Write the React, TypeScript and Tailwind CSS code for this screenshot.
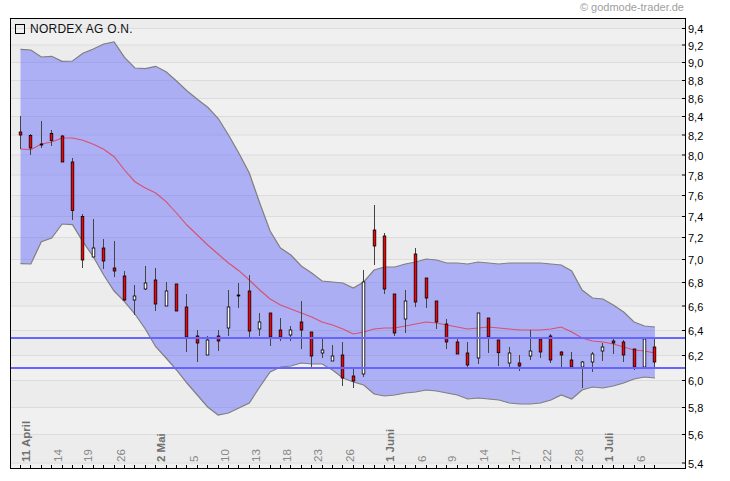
const font = "'Liberation Sans', Arial, sans-serif";

// y pixel of each price gridline, top to bottom
const priceLevels: [string, number][] = [
  ["9,4", 28.5], ["9,2", 45], ["9,0", 62.5], ["8,8", 80.5], ["8,6", 98.5], ["8,4", 116.5], ["8,2", 135],
  ["8,0", 155], ["7,8", 175], ["7,6", 195.5], ["7,4", 216.5], ["7,2", 237.5], ["7,0", 259.5], ["6,8", 282.5],
  ["6,6", 306], ["6,4", 330.5], ["6,2", 355.5], ["6,0", 380.5], ["5,8", 407.5], ["5,6", 434.5], ["5,4", 463],
];

const upper = [
  49.3, 50, 57, 56.3, 61.3, 61, 53.3, 49, 44, 42, 57.3, 68, 68.7, 66.3, 71.7, 81, 90.7, 99.3, 107.3, 118.3, 135, 153.3,
  173, 203, 231, 248, 255, 266, 273, 281, 282, 283, 288, 282, 270, 267, 267, 264, 262, 259, 260, 263, 263, 264, 262,
  263, 264, 263, 263, 263, 263, 264, 265, 271, 290, 298, 299, 305, 312, 322, 326, 327,
];
const lower = [
  263.7, 264, 241.7, 238, 224, 224.7, 241.7, 256.7, 275, 291, 301.7, 314, 329, 346.7, 358, 370, 383, 395, 407, 415, 413,
  408, 403, 387, 372, 367, 366, 363, 364, 364, 370, 378, 382, 385, 394, 396, 395, 393, 392, 390, 391, 393, 395, 399,
  398, 399, 400, 403, 404, 404, 403, 400, 395, 399, 390, 387, 388, 386, 383, 379, 377, 378,
];
const avg = [
  149, 149.7, 144, 142, 138, 138, 140.3, 144.3, 149.3, 156.7, 170, 181.7, 188, 193, 201.7, 213, 225, 235, 245, 254, 263,
  270.7, 280, 290, 299, 305, 309, 313, 317, 322, 325, 329, 334, 332, 329, 328, 328, 326, 324, 322, 323, 325, 327, 329,
  328, 327, 328, 329, 330, 330, 330, 329, 327, 332, 338, 341, 342, 344, 347, 350, 351, 353,
];

// wick top, body top, body bottom, wick bottom, colour
type Candle = [number, number, number, number, "r" | "w"];
const candles: Candle[] = [
  [116, 132, 135, 149, "r"], [134, 135.5, 148, 155, "r"], [121, 144, 145, 148, "r"], [130, 133.5, 140.5, 146, "r"],
  [135, 136, 162, 162, "r"], [158, 162, 210.5, 220, "r"], [214, 216.5, 260, 268, "r"], [219, 248, 257, 257, "w"],
  [239, 248, 261, 269, "r"], [241, 268, 271, 277, "r"], [271, 276, 300, 301, "r"], [285, 296, 300, 315, "w"],
  [266, 283, 289, 290, "w"], [268, 280, 304, 311, "r"], [282, 291, 306, 306, "w"], [284, 284, 311, 311, "r"],
  [294, 307, 337, 352, "r"], [330, 336, 343, 362, "r"], [336, 340, 355, 355, "w"], [330, 336, 341, 351, "r"],
  [290, 307, 328, 336, "w"], [283, 295, 296, 308, "r"], [275, 291, 331, 337, "r"], [313, 322, 329, 336, "w"],
  [313, 313, 337, 346, "r"], [318, 330, 337, 341, "r"], [326, 330, 335, 341, "w"], [301, 322, 330, 349, "r"],
  [332, 332, 356, 367, "r"], [339, 350, 353, 358, "w"], [345, 356, 361, 361, "w"], [342, 355, 378, 386, "r"],
  [369, 376, 381, 388, "r"], [270, 282, 374, 377, "w"], [205, 230, 246, 265, "r"], [233, 236, 289, 294, "r"],
  [294, 294, 333, 336, "r"], [290, 301, 319, 333, "w"], [248, 254, 302, 307, "r"], [278, 278, 298, 308, "r"],
  [301, 301, 322, 329, "r"], [319, 324, 342, 349, "r"], [339, 342, 354, 354, "r"], [342, 353, 365, 367, "r"],
  [313, 313, 358, 364, "w"], [318, 318, 337, 353, "r"], [340, 340, 352.7, 366, "r"], [347, 353, 363, 367, "w"],
  [355, 363, 366, 371, "r"], [330, 351, 356, 360, "w"], [339, 339, 352, 358, "r"], [334, 336, 360, 363, "r"],
  [351, 352, 355, 367, "r"], [352, 360, 367, 367, "r"], [361, 362, 367, 388, "w"], [352, 354, 362, 372, "w"],
  [343, 347, 351, 361, "w"], [339, 341, 343, 354, "r"], [340, 342, 355, 362, "r"], [349, 349, 367, 370, "r"],
  [339, 339, 367, 369, "w"], [339, 347, 362, 367, "r"],
];

const candleX = (i: number) => 20.5 + i * 10.4;
const snapX = (i: number) => Math.floor(candleX(i)) + 0.5;

const dateLabels: [string, number, boolean][] = [
  ["11 April", 26, true], ["14", 58, false], ["19", 88, false], ["26", 121, false], ["2 Mai", 161, true],
  ["5", 194, false], ["10", 225, false], ["13", 256, false], ["18", 287, false], ["23", 318, false], ["26", 350, false],
  ["1 Juni", 390, true], ["6", 422, false], ["9", 452, false], ["14", 484, false], ["17", 516, false], ["22", 547, false],
  ["28", 579, false], ["1 Juli", 609, true], ["6", 641, false],
];

function toPoints(values: number[]): string {
  return values.map((y, i) => `${candleX(i)},${y}`).join(" ");
}

function BandsAndGrid() {
  const edges = [18, ...priceLevels.map(([, y]) => y), 468];
  return (
    <g>
      {edges.slice(0, -1).map((y, i) => (
        <rect key={y} x={10} y={y} width={676} height={edges[i + 1] - y} fill={i % 2 === 0 ? "#ececec" : "#f0f0f0"} />
      ))}
      {priceLevels.map(([label, y]) => (
        <line key={label} x1={10} x2={686} y1={y} y2={y} stroke="#dcdcdc" strokeWidth={1} />
      ))}
    </g>
  );
}

function PriceChart() {
  return (
    <svg className="block h-full w-full" viewBox="11 19 674 449">
      <BandsAndGrid />
      <polygon
        points={`${toPoints(upper)} ${toPoints(lower).split(" ").reverse().join(" ")}`}
        fill="#6468fa"
        fillOpacity={0.47}
      />
      <polyline points={toPoints(upper)} fill="none" stroke="#7f7f7f" strokeWidth={1.2} />
      <polyline points={toPoints(lower)} fill="none" stroke="#7f7f7f" strokeWidth={1.2} />
      <polyline points={toPoints(avg)} fill="none" stroke="#d8506e" strokeWidth={1.1} />
      {candles.map(([wickTop, top, bottom, wickBottom, color], i) => {
        const x = snapX(i);
        const thin = bottom - top < 1.5;
        return (
          <g key={i}>
            <line x1={x} x2={x} y1={wickTop} y2={wickBottom} stroke="#444444" strokeWidth={1} />
            <rect
              x={x - 1.3}
              y={top}
              width={2.6}
              height={bottom - top}
              fill={thin ? "#000000" : color === "r" ? "#ff0000" : "#ffffff"}
              stroke="#000000"
              strokeWidth={0.8}
            />
          </g>
        );
      })}
      <line x1={11} x2={685} y1={338} y2={338} stroke="#6666ff" strokeWidth={2} />
      <line x1={11} x2={685} y1={368} y2={368} stroke="#6666ff" strokeWidth={2} />
      {candles.map((_, i) => (
        <line key={i} x1={snapX(i)} x2={snapX(i)} y1={465} y2={468} stroke="#000000" strokeWidth={1} />
      ))}
      {priceLevels.map(([label, y]) => (
        <line key={label} x1={682} x2={685} y1={y} y2={y} stroke="#000000" strokeWidth={1} />
      ))}
      {dateLabels.map(([label, x, bold]) => (
        <text
          key={label + x}
          transform={`translate(${x + 4} 462) rotate(-90)`}
          fontFamily={font}
          fontSize={bold ? 11.5 : 11.5}
          fontWeight={bold ? 700 : 400}
          fill={bold ? "#707070" : "#888888"}
        >
          {label}
        </text>
      ))}
    </svg>
  );
}

function PriceAxis() {
  return (
    <svg className="block h-[451px] w-[44px]" viewBox="686 18 44 451">
      {priceLevels.map(([label, y]) => (
        <text key={label} x={688} y={y + 4.5} fontFamily={font} fontSize={11} fill="#000000">
          {label}
        </text>
      ))}
    </svg>
  );
}

export default function App() {
  return (
    <div className="h-[481px] w-[730px] overflow-hidden bg-white font-['Liberation_Sans',Arial,sans-serif]">
      <div className="flex h-[18px] items-start justify-end pr-[46px] pt-px text-[11px] leading-[13px] text-[#a0a0a0]">
        © godmode-trader.de
      </div>
      <div className="flex pl-[10px]">
        <div className="relative h-[451px] w-[676px] border border-black">
          <PriceChart />
          <div className="absolute left-[4px] top-[3px] flex items-center gap-[5px] text-[12px] leading-[14px] tracking-[0.25px] text-[#111111]">
            <span className="h-[10px] w-[10px] border border-black" />
            <span>NORDEX AG O.N.</span>
          </div>
        </div>
        <PriceAxis />
      </div>
    </div>
  );
}
